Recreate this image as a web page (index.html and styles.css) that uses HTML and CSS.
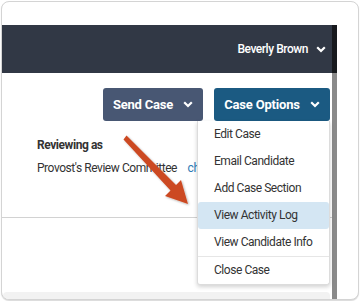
FILE: index.html
```html
<!DOCTYPE html>
<html lang="en">
  <head>
    <meta charset="utf-8">
    <title>Case</title>
    <link rel="stylesheet" href="styles.css">
  </head>
  <body>
    <div class="frame">
      <div class="screen">
        <div class="page">
          <!-- top bar -->
          <div class="topbar">
            <span class="user">Beverly Brown</span>
            <svg class="chev" width="10" height="7" viewBox="0 0 10 7"><path d="M1.2 1.2 L5 5 L8.8 1.2" fill="none" stroke="#fff" stroke-width="2.2"/></svg>
          </div>

          <div class="main">
            <div class="actions">
              <button class="btn send" type="button">Send Case
                <svg class="chev" width="10" height="7" viewBox="0 0 10 7"><path d="M1.2 1.2 L5 5 L8.8 1.2" fill="none" stroke="#fff" stroke-width="2.2"/></svg>
              </button>
              <div class="options-wrap">
                <button class="btn options" type="button">Case Options
                  <svg class="chev" width="10" height="7" viewBox="0 0 10 7"><path d="M1.2 1.2 L5 5 L8.8 1.2" fill="none" stroke="#fff" stroke-width="2.2"/></svg>
                </button>
                <ul class="menu">
                  <li>Edit Case</li>
                  <li>Email Candidate</li>
                  <li>Add Case Section</li>
                  <li class="active">View Activity Log</li>
                  <li>View Candidate Info</li>
                  <li class="divider"></li>
                  <li>Close Case</li>
                </ul>
              </div>
            </div>

            <div class="reviewing">
              <div class="label">Reviewing as</div>
              <div class="committee">Provost's Review Committee <a class="change">change</a></div>
            </div>

            <div class="lower"></div>
            <div class="footer-band"></div>
          </div>
        </div>
        <div class="scrollbar"><div class="scroll-top"></div></div>
      </div>
    </div>

    <!-- annotation arrow -->
    <svg class="arrow" width="361" height="303" viewBox="0 0 361 303">
      <defs>
        <filter id="sh" x="-20%" y="-20%" width="140%" height="140%">
          <feDropShadow dx="1" dy="1" stdDeviation="1" flood-color="#000" flood-opacity="0.3"/>
        </filter>
      </defs>
      <path filter="url(#sh)" fill="#cc4a22" d="M123.5 139.5 L126.5 135.5 L176 185 L181 180 L188 204 L165 196 L170.5 190.5 Z"/>
    </svg>
  </body>
</html>
```

FILE: styles.css
```css
/* page frame */
body {
    margin: 0;
    background: #ffffff;
    font-family: Roboto, 'Liberation Sans', sans-serif;
}

.frame {
    margin: 1px;
    width: 356px;
    height: 297px;
    border: 1px solid #d4d4d4;
    border-radius: 8px;
    overflow: hidden;
    background: #ffffff;
    box-shadow: 0 1px 1px rgba(0, 0, 0, 0.15);
}

.screen {
    margin-top: 23px;
    width: 335px;
    height: 274px;
    display: flex;
}

.page {
    flex: 1;
    display: flex;
    flex-direction: column;
}

.scrollbar {
    width: 5px;
    background: #8a8a8a;
}

.scroll-top {
    height: 48px;
    background: #17191d;
}

/* top bar */
.topbar {
    height: 48px;
    background: #313845;
    display: flex;
    align-items: center;
    justify-content: flex-end;
    padding-right: 6px;
    color: #ffffff;
    font-size: 12px;
    font-weight: 500;
    letter-spacing: -0.45px;
}

.topbar .chev {
    margin-left: 8px;
}

.main {
    flex: 1;
    display: flex;
    flex-direction: column;
}

/* buttons */
.actions {
    display: flex;
    justify-content: flex-end;
    gap: 11px;
    padding: 15px 2px 0 0;
}

.btn {
    height: 33px;
    border: none;
    border-radius: 3px;
    color: #ffffff;
    font-family: Roboto, 'Liberation Sans', sans-serif;
    font-size: 13px;
    font-weight: 700;
    letter-spacing: -0.2px;
    display: flex;
    align-items: center;
    justify-content: center;
    gap: 10px;
    padding: 0;
}

.send {
    width: 100px;
    background: #485773;
}

.options {
    width: 116px;
    background: #1b5a82;
}

.options-wrap {
    position: relative;
}

.menu {
    position: absolute;
    top: 33px;
    right: 0;
    width: 131px;
    margin: 0;
    padding: 0;
    list-style: none;
    background: #ffffff;
    border: 1px solid #dcdcdc;
    border-top: none;
    border-radius: 0 0 3px 3px;
    box-shadow: 0 2px 4px rgba(0, 0, 0, 0.18);
    font-size: 12px;
    letter-spacing: -0.45px;
    color: #333333;
    z-index: 5;
}

.menu li {
    height: 27px;
    line-height: 27px;
    padding-left: 16px;
}

.menu li.active {
    background: #d4e6f3;
    border-radius: 3px;
}

.menu li.divider {
    height: 1px;
    background: #e6e6e6;
}

/* reviewing block */
.reviewing {
    padding: 18px 0 0 35px;
    color: #333333;
    font-size: 12px;
    letter-spacing: -0.45px;
    line-height: 13px;
    height: 97px;
    box-sizing: border-box;
    border-bottom: 1px solid #d2d2d2;
}

.reviewing .label {
    font-weight: 700;
    margin-bottom: 10px;
}

.change {
    color: #2d7ab5;
    margin-left: 8px;
}

.lower {
    flex: 1;
}

.footer-band {
    height: 7px;
    margin: 0 2px 0 1px;
    background: #f2f2f2;
    border-radius: 4px 4px 0 0;
}

.arrow {
    position: absolute;
    top: 0;
    left: 0;
    pointer-events: none;
}
```
